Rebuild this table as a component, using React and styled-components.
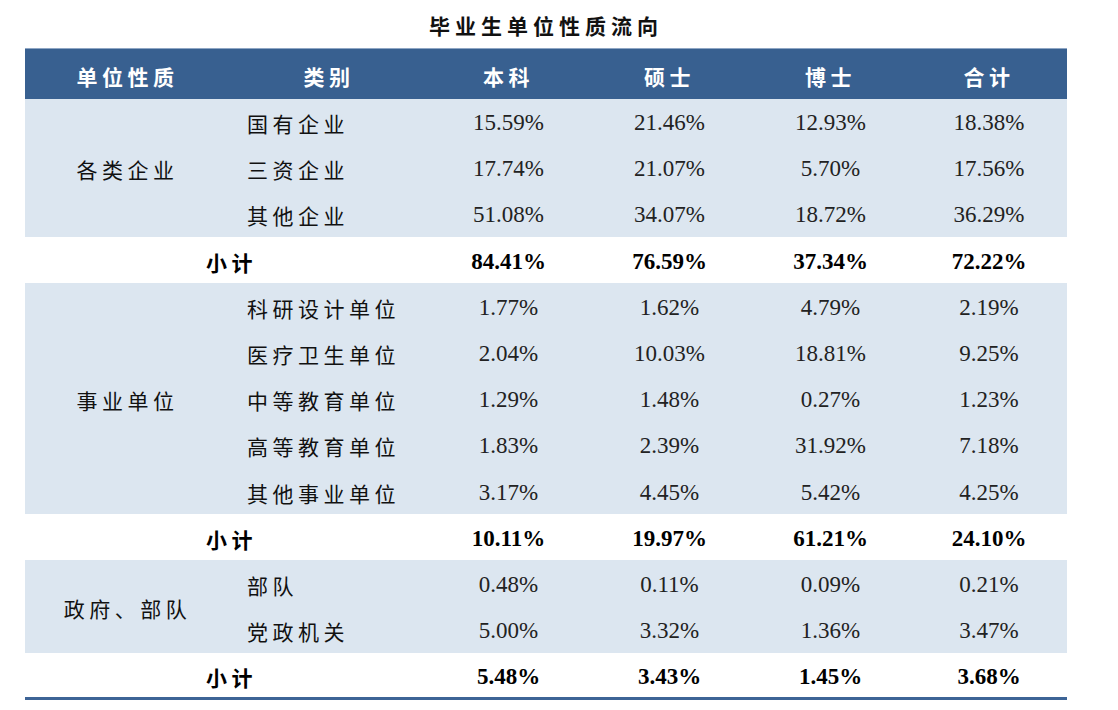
import React from "react";
import styled, { createGlobalStyle } from "styled-components";

const GlobalStyle = createGlobalStyle`
  body {
    margin: 0;
    background: #ffffff;
    font-family: "Liberation Serif", "Noto Sans CJK SC", serif;
  }
`

const Page = styled.div`
  width: 1118px;
  padding: 10px 0 0 25px;
  box-sizing: border-box;
`
const Title = styled.h2`
  margin: 0 0 8px;
  width: 1042px;
  text-align: center;
  font-family: "Noto Sans CJK SC", sans-serif;
  font-size: 21px;
  font-weight: 700;
  letter-spacing: 5px;
  line-height: 30px;
  color: #111;
`
const Table = styled.table`
  width: 1042px;
  border-collapse: collapse;
  table-layout: fixed;
  border-top: 1px solid #8fa6c4;
  border-bottom: 3px solid #3d6496;
`
const HeadCell = styled.th`
  height: 50px;
  padding: 5px 0 0;
  box-sizing: border-box;
  background: #386090;
  color: #ffffff;
  font-family: "Noto Sans CJK SC", sans-serif;
  font-size: 21px;
  font-weight: 700;
  letter-spacing: 4.5px;
  text-align: center;
`
const Row = styled.tr`
  height: 46.2px;
  background: ${({ $total }) => ($total ? "#ffffff" : "#dce6f0")};
`
const GroupCell = styled.td`
  padding: 3px 0 0;
  text-align: center;
  vertical-align: middle;
  font-family: "Noto Sans CJK SC", sans-serif;
  font-size: 21px;
  letter-spacing: 4.5px;
  color: #111;
`
const KindCell = styled.td`
  padding: 3px 0 0 17px;
  text-align: left;
  font-family: "Noto Sans CJK SC", sans-serif;
  font-size: 21px;
  letter-spacing: 4.5px;
  color: #111;
`
const TotalLabel = styled.td`
  padding: 3px 0 0 10px;
  text-align: center;
  font-family: "Noto Sans CJK SC", sans-serif;
  font-size: 21px;
  font-weight: 700;
  letter-spacing: 4.5px;
  color: #000;
`
const Num = styled.td`
  padding: 3px 0 0;
  text-align: center;
  font-family: "Liberation Serif", serif;
  font-size: 23px;
  font-weight: ${({ $bold }) => ($bold ? 700 : 400)};
  color: ${({ $bold }) => ($bold ? "#000" : "#222")};
`

const groups = [
  {
    name: "各类企业",
    rows: [
      ["国有企业", "15.59%", "21.46%", "12.93%", "18.38%"],
      ["三资企业", "17.74%", "21.07%", "5.70%", "17.56%"],
      ["其他企业", "51.08%", "34.07%", "18.72%", "36.29%"],
    ],
    total: ["84.41%", "76.59%", "37.34%", "72.22%"],
  },
  {
    name: "事业单位",
    rows: [
      ["科研设计单位", "1.77%", "1.62%", "4.79%", "2.19%"],
      ["医疗卫生单位", "2.04%", "10.03%", "18.81%", "9.25%"],
      ["中等教育单位", "1.29%", "1.48%", "0.27%", "1.23%"],
      ["高等教育单位", "1.83%", "2.39%", "31.92%", "7.18%"],
      ["其他事业单位", "3.17%", "4.45%", "5.42%", "4.25%"],
    ],
    total: ["10.11%", "19.97%", "61.21%", "24.10%"],
  },
  {
    name: "政府、部队",
    rows: [
      ["部队", "0.48%", "0.11%", "0.09%", "0.21%"],
      ["党政机关", "5.00%", "3.32%", "1.36%", "3.47%"],
    ],
    total: ["5.48%", "3.43%", "1.45%", "3.68%"],
  },
]

const headers = ["单位性质", "类别", "本科", "硕士", "博士", "合计"]
const widths = [205, 198, 161, 161, 161, 156]

export default function App() {
  return (
    <Page>
      <GlobalStyle />
      <Title>毕业生单位性质流向</Title>
      <Table>
        <colgroup>
          {widths.map((w, i) => (
            <col key={i} style={{ width: w }} />
          ))}
        </colgroup>
        <thead>
          <tr>
            {headers.map((h) => (
              <HeadCell key={h}>{h}</HeadCell>
            ))}
          </tr>
        </thead>
        <tbody>
          {groups.map((g) => (
            <React.Fragment key={g.name}>
              {g.rows.map((r, i) => (
                <Row key={r[0]}>
                  {i === 0 && <GroupCell rowSpan={g.rows.length}>{g.name}</GroupCell>}
                  <KindCell>{r[0]}</KindCell>
                  {r.slice(1).map((v, j) => (
                    <Num key={j}>{v}</Num>
                  ))}
                </Row>
              ))}
              <Row $total>
                <TotalLabel colSpan={2}>小计</TotalLabel>
                {g.total.map((v, j) => (
                  <Num key={j} $bold>{v}</Num>
                ))}
              </Row>
            </React.Fragment>
          ))}
        </tbody>
      </Table>
    </Page>
  )
}
